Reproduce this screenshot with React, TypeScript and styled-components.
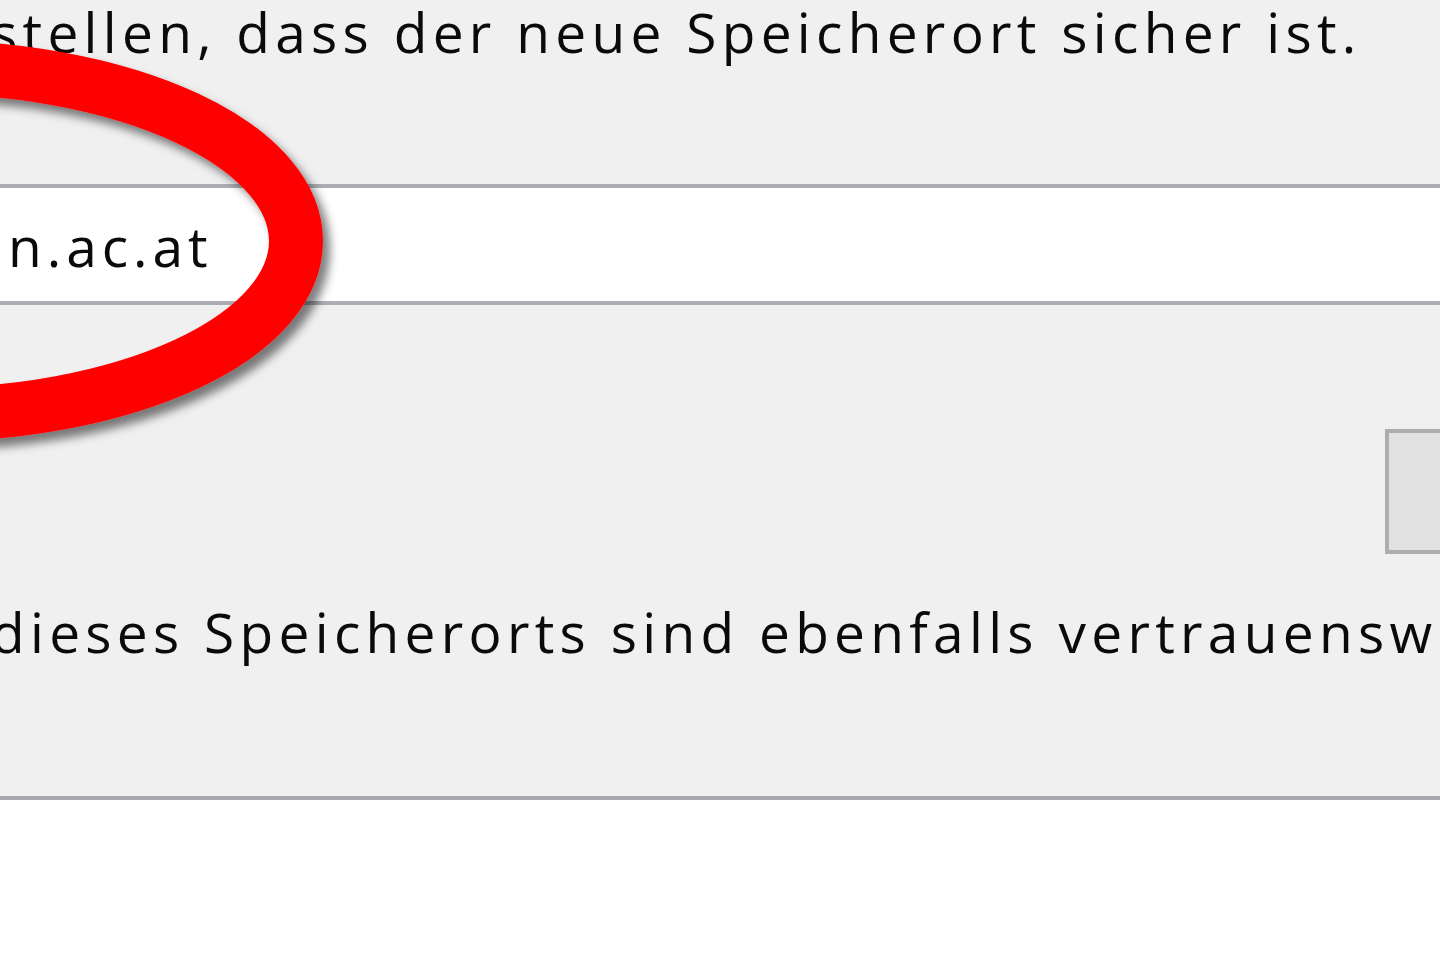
import styled, { createGlobalStyle } from "styled-components";

const GlobalStyle = createGlobalStyle`
  html, body {
    margin: 0;
    padding: 0;
    background: #ffffff;
  }
  body {
    font-family: "Open Sans", "DejaVu Sans", sans-serif;
    color: #0a0a0a;
  }
`;

const Page = styled.div`
  position: relative;
  width: 1440px;
  height: 956px;
  overflow: hidden;
  display: flex;
  flex-direction: column;
`;

const Panel = styled.div`
  background: #f0f0f0;
  height: 796px;
  display: flex;
  flex-direction: column;
  border-bottom: 4px solid #a8a9b0;
`;

const Line = styled.div<{ $top: number }>`
  font-size: 55px;
  line-height: 64px;
  white-space: nowrap;
  margin-top: ${(p) => p.$top}px;
  margin-left: -9px;
  letter-spacing: 5.3px;
`;

const Field = styled.div`
  margin-top: 120px;
  margin-left: -10px;
  margin-right: -10px;
  height: 113px;
  background: #ffffff;
  border-top: 4px solid #abadb3;
  border-bottom: 4px solid #abadb3;
  display: flex;
  align-items: center;
`;

const FieldText = styled.span`
  font-size: 55px;
  padding-left: 18px;
  padding-top: 2px;
  letter-spacing: 5px;
`;

const ButtonRow = styled.div`
  display: flex;
  justify-content: flex-end;
  margin-top: 124px;
  margin-right: -203px;
`;

const Button = styled.div`
  width: 250px;
  height: 117px;
  background: #e1e1e1;
  border: 4px solid #adadad;
`;

const Footer = styled.div`
  flex: 1;
  background: #ffffff;
`;

const Overlay = styled.svg`
  position: absolute;
  left: 0;
  top: 0;
  pointer-events: none;
`;

export default function App() {
  return (
    <>
      <GlobalStyle />
      <Page>
        <Panel>
          <Line $top={0}>stellen, dass der neue Speicherort sicher ist.</Line>
          <Field>
            <FieldText>n.ac.at</FieldText>
          </Field>
          <ButtonRow>
            <Button />
          </ButtonRow>
          <Line $top={46}>dieses Speicherorts sind ebenfalls vertrauenswürdig</Line>
        </Panel>
        <Footer />
        <Overlay width="1440" height="956" viewBox="0 0 1440 956">
          <defs>
            <filter id="shadow" x="-50%" y="-50%" width="200%" height="200%">
              <feDropShadow dx="7" dy="8" stdDeviation="5" floodColor="#000" floodOpacity="0.5" />
            </filter>
          </defs>
          <ellipse
            cx="-77"
            cy="241"
            rx="373"
            ry="174"
            fill="none"
            stroke="#ff0000"
            strokeWidth="54"
            filter="url(#shadow)"
          />
        </Overlay>
      </Page>
    </>
  );
}
